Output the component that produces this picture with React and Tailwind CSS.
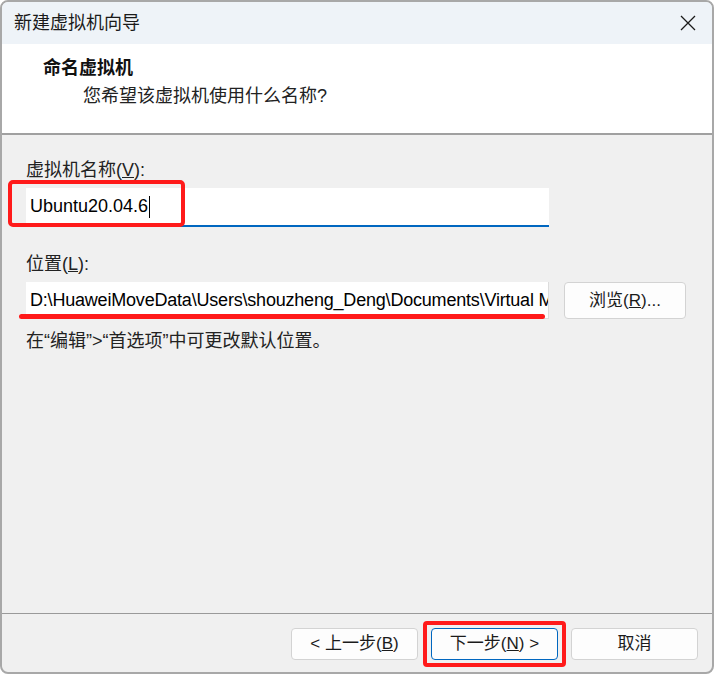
import React from 'react';

const font = { fontFamily: '"Liberation Sans", "Noto Sans CJK SC", sans-serif' };

const Btn = ({ children, primary }) => (
  <button
    className={
      primary
        ? 'w-[127px] h-[32px] rounded-[4px] border border-[#0067c0] bg-[#fdfdfd] text-[17px] text-[#1b1b1b] flex items-center justify-center'
        : 'w-[127px] h-[32px] rounded-[4px] border border-[#d3d3d3] bg-[#fdfdfd] text-[17px] text-[#1b1b1b] flex items-center justify-center'
    }
  >
    {children}
  </button>
);

export default function App() {
  return (
    <div className="w-[714px] h-[674px] bg-white" style={font}>
      <div className="w-full h-full border-2 border-[#a8a8a8] rounded-[8px] overflow-hidden flex flex-col bg-[#f0f0f0]">
        {/* title bar */}
        <div className="h-[42px] bg-[#eef3f8] flex items-center justify-between pl-[12px] pr-[16px] shrink-0">
          <div className="text-[18px] text-[#1a1a1a]">新建虚拟机向导</div>
          <svg width="16" height="16" viewBox="0 0 16 16">
            <path d="M1 1 L15 15 M15 1 L1 15" stroke="#1a1a1a" strokeWidth="1.3" />
          </svg>
        </div>

        {/* header */}
        <div className="h-[89px] bg-white shrink-0 pl-[41px] pt-[11px]">
          <div className="text-[18px] font-bold text-[#111] leading-[26px]">命名虚拟机</div>
          <div className="text-[18px] text-[#222] leading-[26px] pl-[40px] mt-[2px]">您希望该虚拟机使用什么名称?</div>
        </div>
        <div className="h-[2px] bg-[#a0a0a0] shrink-0" />

        {/* body */}
        <div className="flex-1 pl-[24px] pt-[23px]">
          <div className="text-[18px] text-[#222] leading-[24px]">
            虚拟机名称(<span className="underline">V</span>):
          </div>
          <div className="relative mt-[6px] w-[523px] h-[39px] bg-white border-b-2 border-[#0067c0] flex items-center pl-[4px]">
            <span className="text-[18px] text-black">Ubuntu20.04.6</span>
            <span className="w-px h-[22px] bg-black ml-[1px]" />
            <div className="absolute left-[-18px] top-[-8px] w-[177px] h-[47px] border-[4px] border-[#ff1a1a] rounded-[5px]" />
          </div>

          <div className="text-[18px] text-[#222] leading-[24px] mt-[25px]">
            位置(<span className="underline">L</span>):
          </div>
          <div className="flex items-center mt-[6px] gap-[15px]">
            <div className="relative w-[523px] h-[37px] bg-white border-r border-b border-[#dcdcdc] flex items-center pl-[4px]">
              <div className="overflow-hidden whitespace-nowrap w-full text-[18px] tracking-[-0.2px] text-black">
                D:\HuaweiMoveData\Users\shouzheng_Deng\Documents\Virtual Machines\Ubuntu20.04.6
              </div>
              <div className="absolute left-[-7px] top-[32px] w-[526px] h-[5px] rounded-full bg-[#ff1a1a]" />
            </div>
            <button className="w-[122px] h-[37px] rounded-[4px] border border-[#d3d3d3] bg-[#fdfdfd] text-[17px] text-[#1b1b1b]">
              浏览(<span className="underline">R</span>)...
            </button>
          </div>

          <div className="text-[18px] text-[#222] leading-[24px] mt-[10px]">
            在“编辑”&gt;“首选项”中可更改默认位置。
          </div>
        </div>

        {/* footer */}
        <div className="h-[1px] bg-[#9a9a9a] shrink-0" />
        <div className="h-[58px] shrink-0 flex items-start justify-end pr-[14px] pt-[14px] gap-[13px]">
          <Btn>
            &lt; 上一步(<span className="underline">B</span>)
          </Btn>
          <div className="relative">
            <Btn primary>
              下一步(<span className="underline">N</span>) &gt;
            </Btn>
            <div className="absolute left-[-8px] top-[-7px] w-[143px] h-[46px] border-[4px] border-[#ff1a1a] rounded-[4px]" />
          </div>
          <Btn>取消</Btn>
        </div>
      </div>
    </div>
  );
}
